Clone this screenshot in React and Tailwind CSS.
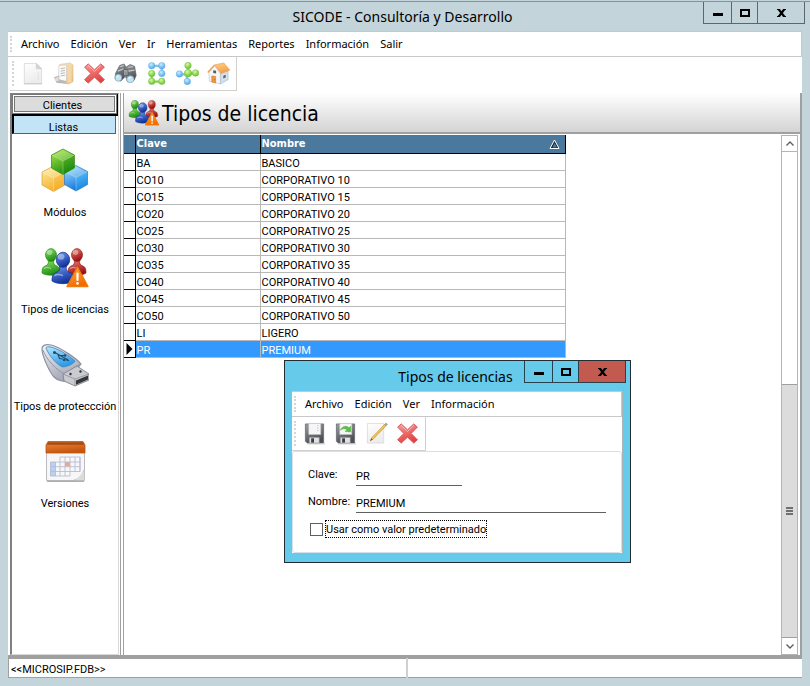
import React, { useState } from "react";

const ROWS = [
  ["BA", "BASICO"],
  ["CO10", "CORPORATIVO 10"],
  ["CO15", "CORPORATIVO 15"],
  ["CO20", "CORPORATIVO 20"],
  ["CO25", "CORPORATIVO 25"],
  ["CO30", "CORPORATIVO 30"],
  ["CO35", "CORPORATIVO 35"],
  ["CO40", "CORPORATIVO 40"],
  ["CO45", "CORPORATIVO 45"],
  ["CO50", "CORPORATIVO 50"],
  ["LI", "LIGERO"],
  ["PR", "PREMIUM"],
];

const MAIN_MENU = [
  "Archivo",
  "Edición",
  "Ver",
  "Ir",
  "Herramientas",
  "Reportes",
  "Información",
  "Salir",
];

const DIALOG_MENU = ["Archivo", "Edición", "Ver", "Información"];

// shared gradients, referenced by every icon below
function Gradients() {
  const linear = [
    ["gGreen", "#8ee86a", "#1f8f12"],
    ["gBlue", "#6f9cf5", "#12339c"],
    ["gRed", "#f08078", "#9c1010"],
    ["gWarn", "#ffb347", "#f26a00"],
    ["gCross", "#ff9a9a", "#e04444"],
    ["gPaper", "#ffffff", "#ececec"],
    ["gFolder", "#fbe6bd", "#e4bd80"],
    ["gDark", "#9a9ea3", "#4c4f54"],
    ["gSteel", "#f4f5f8", "#a4a8b4"],
    ["gGlass", "#b5e8ff", "#2e9be8"],
    ["gOrange", "#ef8a3c", "#c4560f"],
    ["gRoof", "#ffd089", "#f2a048"],
    ["gYellow", "#fff0a8", "#f3b02e"],
    ["gCubeBlue", "#a8ecff", "#1672dc"],
    ["gCubeGreen", "#b4ee50", "#22920c"],
  ];
  const radial = [
    ["rGreen", "#d8fba0", "#62c028"],
    ["rBlue", "#c9ecff", "#4ba6ec"],
  ];
  return (
    <svg width="0" height="0" className="absolute" aria-hidden="true">
      <defs>
        {linear.map(([id, a, b]) => (
          <linearGradient key={id} id={id} x1="0" y1="0" x2="0.4" y2="1">
            <stop offset="0" stopColor={a} />
            <stop offset="1" stopColor={b} />
          </linearGradient>
        ))}
        {radial.map(([id, a, b]) => (
          <radialGradient key={id} id={id} cx="0.4" cy="0.3" r="0.7">
            <stop offset="0" stopColor={a} />
            <stop offset="1" stopColor={b} />
          </radialGradient>
        ))}
      </defs>
    </svg>
  );
}

function NewIcon() {
  return (
    <svg viewBox="0 0 24 24" className="size-[23px]" aria-hidden="true">
      <path d="M3.500 1.500H16L21.500 7V22.500H3.500Z" fill="url(#gPaper)" stroke="#dcdcdc" />
      <path d="M16 1.500V7H21.500Z" fill="#d4d4d4" stroke="#c8c8c8" strokeWidth="0.600" />
      <path d="M18 11v1M18 14v1M18 17v1" stroke="#cfcfcf" />
      <path d="M3 22.800H22" stroke="#c6c6c6" />
    </svg>
  );
}

function FolderIcon() {
  return (
    <svg viewBox="0 0 24 24" className="size-[23px]" aria-hidden="true">
      <path d="M8 2.500L19 1L22 3V20.500L17 23L7 21Z" fill="url(#gFolder)" stroke="#dfc091" strokeWidth="0.600" />
      <path d="M7 4L15 2.800V19.500L7 21Z" fill="#fafafa" stroke="#c9c9c9" strokeWidth="0.600" />
      <path d="M9 7l4.500-.7M9 9.500l4.500-.7M9 12l4.500-.7M9 14.500l4.500-.7" stroke="#a4a4a4" strokeWidth="0.800" />
      <path d="M16 3.500L20.500 2.500V20.500L16 22.500Z" fill="#f3d7a6" />
      <path d="M2 16L7.500 14V18L13 19.500L15.500 22.500L5 22Z" fill="#b8b8b8" />
      <path d="M3 17L7 15.500V20L4 19.500Z" fill="#dedede" />
    </svg>
  );
}

function CrossIcon() {
  return (
    <svg viewBox="0 0 24 24" className="size-[23px]" aria-hidden="true">
      <path
        d="M5.500 2L12 8.200L18.500 2L22.300 5.300L15.800 12L22.300 18.500L18.500 22L12 15.800L5.500 22L1.700 18.500L8.200 12L1.700 5.300Z"
        fill="url(#gCross)"
        stroke="#d04848"
        strokeWidth="0.900"
        strokeLinejoin="round"
      />
      <path d="M5.500 3.600L12 9.800L18.500 3.600" fill="none" stroke="#ffc4c4" strokeWidth="0.900" />
    </svg>
  );
}

function BinocularsIcon() {
  return (
    <svg viewBox="0 0 24 24" className="size-[23px]" aria-hidden="true">
      <path d="M6 3.500L10.500 2L12.500 5L11 16L7 20L1 17.500L1.500 12Z" fill="url(#gDark)" stroke="#5b5e62" strokeWidth="0.600" />
      <path d="M13 5L17 2.500L21.500 4.500L23.200 14L21 19L14 20.500L12 15Z" fill="url(#gDark)" stroke="#5b5e62" strokeWidth="0.600" />
      <path d="M6.500 5L10 3.800M4 9.500L10 7M15 5.500L20 5M14.500 9.500L21.500 8.500" stroke="#c8cbd0" strokeWidth="1.200" />
      <rect x="10" y="8" width="4.500" height="6" rx="1" fill="#b7babf" stroke="#44474b" strokeWidth="0.700" />
      <path d="M11 10.500h2.500M11 12.500h2.500" stroke="#55585c" strokeWidth="0.800" />
      <ellipse cx="4.600" cy="16.500" rx="3.500" ry="3.600" fill="#bfe6f7" stroke="#8aa4b0" strokeWidth="0.800" />
      <ellipse cx="17" cy="18" rx="3.800" ry="3.600" fill="#bfe6f7" stroke="#8aa4b0" strokeWidth="0.800" />
      <path d="M3 16a2 2 0 0 1 2-1.500M15.500 17.500a2 2 0 0 1 2-1.500" fill="none" stroke="#fff" />
    </svg>
  );
}

function Ball({ x, y, color, r = 3.4 }) {
  return (
    <circle
      cx={x}
      cy={y}
      r={r}
      fill={color === "green" ? "url(#rGreen)" : "url(#rBlue)"}
      stroke={color === "green" ? "#78bf45" : "#6ab1e4"}
      strokeWidth="0.500"
    />
  );
}

function ChainIcon() {
  return (
    <svg viewBox="0 0 24 24" className="size-[23px]" aria-hidden="true">
      <path d="M7 4H17.500V12" fill="none" stroke="#7fc0ec" strokeWidth="2.400" />
      <path d="M7 12V20.500H17.500" fill="none" stroke="#8acc55" strokeWidth="2.400" />
      <Ball x={7} y={3.800} color="blue" />
      <Ball x={17.500} y={3.800} color="blue" />
      <Ball x={7} y={12} color="green" />
      <Ball x={17.500} y={12} color="blue" />
      <Ball x={7} y={20.200} color="green" />
      <Ball x={17.500} y={20.200} color="green" />
    </svg>
  );
}

function NodesIcon() {
  return (
    <svg viewBox="0 0 24 24" className="size-[23px]" aria-hidden="true">
      <path d="M12.500 4V12H20" fill="none" stroke="#8acc55" strokeWidth="2.400" />
      <path d="M4 13H11.500V20" fill="none" stroke="#7fc0ec" strokeWidth="2.400" />
      <Ball x={12.500} y={3.700} color="green" />
      <Ball x={20.400} y={11.500} color="green" />
      <Ball x={3.600} y={12.500} color="blue" />
      <Ball x={11.800} y={20.300} color="blue" />
      <Ball x={12.500} y={11.700} color="green" r={3.900} />
    </svg>
  );
}

function HouseIcon() {
  return (
    <svg viewBox="0 0 24 24" className="size-[23px]" aria-hidden="true">
      <path d="M2 11L8 4L14 12V23L2.500 20Z" fill="#f6f7fa" stroke="#b6bcc6" strokeWidth="0.600" />
      <path d="M14 12L22 9V18.500L14 23Z" fill="#cddfee" stroke="#a8b8c6" strokeWidth="0.600" />
      <path d="M8 3L17.500 1L23.800 8.500L14.500 12Z" fill="url(#gRoof)" stroke="#e8a050" strokeWidth="0.700" />
      <path d="M8 3L0.800 11" stroke="#eda04c" strokeWidth="1.500" />
      <path d="M5 14.500L9 15.200V22L5 20.900Z" fill="#f09a38" stroke="#c8741c" strokeWidth="0.600" />
      <circle cx="8" cy="18.500" r="0.500" fill="#7a400c" />
      <path d="M6.500 8.500L9.500 9V12L6.500 11.500Z" fill="#555d68" />
      <path d="M16.500 14L20 12.500V16.500L16.500 18Z" fill="#5d6874" stroke="#fff" strokeWidth="0.700" />
    </svg>
  );
}

function Person({ fill, stroke, transform }) {
  return (
    <g transform={transform} fill={fill} stroke={stroke} strokeWidth="0.600">
      <path d="M6 12C7 15 6 17 3 18C.5 19 0 21 0 25C4 28 14 28 18 25C18 21 17.500 19 15 18C12 17 11 15 12 12Z" />
      <ellipse cx="9" cy="7" rx="5.500" ry="6.400" />
      <ellipse cx="7.500" cy="4.500" rx="2.800" ry="2.400" fill="#fff" opacity="0.400" stroke="none" />
      <path d="M2 20.500C5 18.500 7 19.500 9 20.500" fill="none" stroke="#fff" opacity="0.450" strokeWidth="1.200" />
    </g>
  );
}

function PeopleIcon({ className }) {
  return (
    <svg viewBox="0 0 48 40" className={className} aria-hidden="true">
      <Person fill="url(#gRed)" stroke="#8c1414" transform="translate(27 0)" />
      <Person fill="url(#gGreen)" stroke="#1c7a12" transform="translate(1 0)" />
      <Person fill="url(#gBlue)" stroke="#142c84" transform="translate(11 3.500) scale(1.220 1.180)" />
      <path d="M36.500 19L47 38.500H26Z" fill="url(#gWarn)" stroke="#ee7a10" strokeWidth="1.400" strokeLinejoin="round" />
      <path d="M36.500 25.500V32" stroke="#fff" strokeWidth="2.200" strokeLinecap="round" />
      <circle cx="36.500" cy="35.400" r="1.300" fill="#fff" />
    </svg>
  );
}

function Cube({ transform, fill, edge, side }) {
  return (
    <g transform={transform} stroke={edge} strokeWidth="0.700" strokeLinejoin="round">
      <path d="M11.500 0L23 6V19L11.500 25.500L0 19V6Z" fill={fill} />
      <path d="M11.500 1L22 6.300L11.500 12L1 6.300Z" fill="#fff" opacity="0.200" stroke="none" />
      <path d="M11.500 12V25L22.500 18.700V6.500Z" fill={side} opacity="0.350" stroke="none" />
      <path d="M0.500 6.300L11.500 12L22.500 6.300M11.500 12V25" fill="none" stroke="#fff" opacity="0.400" />
    </g>
  );
}

function CubesIcon() {
  return (
    <svg viewBox="0 0 48 48" className="size-12" aria-hidden="true">
      <Cube transform="translate(1 19)" fill="url(#gYellow)" edge="#dba034" side="#f8b030" />
      <Cube transform="translate(23.500 18.500)" fill="url(#gCubeBlue)" edge="#2c78c4" side="#34c0f8" />
      <Cube transform="translate(10.500 2)" fill="url(#gCubeGreen)" edge="#2f8a18" side="#1c8410" />
    </svg>
  );
}

function UsbIcon() {
  return (
    <svg viewBox="0 0 48 48" className="size-12" aria-hidden="true">
      <path d="M1 8C1 15 9 32 13 36C16 39 22 41 25 40L40 23C36 18 19 6 10 4C5 3 1 4 1 8Z" fill="url(#gSteel)" stroke="#8d90a4" strokeWidth="1.200" />
      <path d="M2 9C4 17 17 31 24 33L39 23" fill="none" stroke="#8d90a4" strokeWidth="0.900" />
      <path d="M5 7C8 15 17 25 22 26C26 26 34 22 34 20C28 14 15 7 10 6C7 5.500 5 6 5 7Z" fill="url(#gGlass)" stroke="#3f87b8" strokeWidth="0.800" />
      <path d="M13 11L27 19M17 13.500L18.500 17.500L22 18M19 14.500L24 14.500" fill="none" stroke="#234a66" strokeWidth="1.100" />
      <circle cx="13.500" cy="11.500" r="1.500" fill="#234a66" />
      <circle cx="24" cy="14.500" r="1.300" fill="#234a66" />
      <path d="M22 18h2.500v2H22ZM26 17.500L28.500 20.200L25.500 20Z" fill="#234a66" />
      <path d="M22 33L36 25L48 33V39L34 45L23 40Z" fill="#c9cbd0" stroke="#82858c" strokeWidth="0.900" />
      <path d="M22 33L34 38L48 33M34 38V45" fill="none" stroke="#8e9198" strokeWidth="0.800" />
      <path d="M35 39.500L47 34.500V38.500L35 43.800Z" fill="#34363a" />
      <path d="M28.500 32.500l2 1M38.500 30l2 1" stroke="#3a3c40" strokeWidth="2.200" />
    </svg>
  );
}

function CalendarIcon() {
  return (
    <svg viewBox="0 0 48 48" className="size-12" aria-hidden="true">
      <path d="M5.500 14H43.500V42.500H5.500Z" fill="#f7f7f8" stroke="#bcbcc0" />
      <path d="M7 3.500H42L44 7V15H5V7Z" fill="url(#gOrange)" stroke="#b9560f" strokeWidth="0.800" />
      <path d="M7 4.200H42L43 6.800H6Z" fill="#a84a12" />
      <path d="M9.500 24H14.500V38H9.500Z" fill="#b9d0f4" />
      <path d="M24 24H29V28.500H24Z" fill="#f4a67e" />
      <path
        d="M19 19H39V33.500H9.500M9.500 24H39M9.500 28.700H39M9.500 24V38H29V19M14.500 24V38M19 19V38M24 19V38M34 19V33.500M39 19V33.500"
        fill="none"
        stroke="#b7bcd2"
        strokeWidth="0.900"
      />
      <path d="M33 42C38 41 41 37 43 32V42Z" fill="#fff" stroke="#c2c2c6" strokeWidth="0.800" />
      <path d="M34.500 42.300H43.200V34Z" fill="#dcdcde" />
      <path d="M6 43.300H43" stroke="#9c9ca0" />
    </svg>
  );
}

function SaveIcon({ arrow }) {
  return (
    <svg viewBox="0 0 24 24" className="size-[23px]" aria-hidden="true">
      <path d="M2.500 2H21.500V22H4.500L2.500 20Z" fill="url(#gDark)" stroke="#66696d" strokeWidth="0.800" />
      <path d="M6 1.500H18.500V13H6Z" fill="#f6f6f6" stroke="#c6c6c6" strokeWidth="0.600" />
      <path d="M6.500 16H17V22H6.500Z" fill="#e2e2e2" stroke="#7c7f84" strokeWidth="0.600" />
      <path d="M8.500 17H11.500V21.500H8.500Z" fill="#3c3f44" />
      <path d="M4 22.800H23" stroke="#c2c2c2" />
      {arrow ? (
        <path d="M6.500 8.500C8.500 4 13.500 3.500 15.500 6L17.500 4.500V10.500L11.500 9.800L13.500 8C11.500 6.500 9 7 6.500 8.500Z" fill="#58c04a" stroke="#48a83c" strokeWidth="0.400" />
      ) : (
        <path d="M15.500 3.500v1M15.500 6v1M15.500 8.500v1" stroke="#a8a8a8" />
      )}
    </svg>
  );
}

function EditIcon() {
  return (
    <svg viewBox="0 0 24 24" className="size-[23px]" aria-hidden="true">
      <path d="M2.500 1.500H19.500V22H2.500Z" fill="url(#gPaper)" stroke="#d8d8d8" strokeWidth="0.800" />
      <path d="M20.500 2.500L22 4L8 18.500L6.500 17Z" fill="#f5c44e" stroke="#b98a2c" strokeWidth="0.600" />
      <path d="M6.500 17L8 18.500L5 20Z" fill="#6c5230" />
      <path d="M20.500 2.500L22 1L23.500 2.500L22 4Z" fill="#a8a8b0" stroke="#82828a" strokeWidth="0.500" />
    </svg>
  );
}

function SaveNextIcon() {
  return <SaveIcon arrow />;
}

const MAIN_TOOLS = [
  ["Nuevo", NewIcon],
  ["Abrir", FolderIcon],
  ["Eliminar", CrossIcon],
  ["Buscar", BinocularsIcon],
  ["Estructura", ChainIcon],
  ["Relaciones", NodesIcon],
  ["Inicio", HouseIcon],
];

const DIALOG_TOOLS = [
  ["Guardar", SaveIcon],
  ["Guardar y nuevo", SaveNextIcon],
  ["Editar", EditIcon],
  ["Eliminar", CrossIcon],
];

const SIDE_ITEMS = [
  ["Módulos", <CubesIcon />],
  ["Tipos de licencias", <PeopleIcon className="h-10 w-12" />],
  ["Tipos de proteccción", <UsbIcon />],
  ["Versiones", <CalendarIcon />],
];

function Grip() {
  return (
    <span className="my-1 w-px self-stretch border-l-2 border-dotted border-gray-300" />
  );
}

function MenuBar({ items }) {
  return (
    <nav className="flex h-[26px] items-center border-y border-r border-[#c8c8cc] bg-white pl-[2px] font-['Noto_Sans',sans-serif] text-[11px]">
      <Grip />
      <div className="flex gap-[11px] pt-px pl-[9px]">
        {items.map((item) => (
          <button key={item} type="button">
            {item}
          </button>
        ))}
      </div>
    </nav>
  );
}

function ToolBar({ tools }) {
  return (
    <div className="flex h-[34px] w-fit items-center border-r border-b border-[#d0d0d0] bg-white px-[2px]">
      <Grip />
      <div className="flex pl-[3px]">
        {tools.map(([name, Icon]) => (
          <button
            key={name}
            type="button"
            aria-label={name}
            className="flex w-[31px] justify-center"
          >
            <Icon />
          </button>
        ))}
      </div>
    </div>
  );
}

function TitleBar({ title, closeClass, lineClass, className }) {
  return (
    <header className={`flex ${className}`}>
      <div className="flex-1" />
      <h1 className="self-center font-['Noto_Sans',sans-serif] text-[14px] whitespace-nowrap">
        {title}
      </h1>
      <div className="flex flex-1 items-start justify-end">
        <div className={`flex h-[22px] divide-x border border-t-0 ${lineClass}`}>
          <button
            type="button"
            aria-label="Minimizar"
            className={`flex w-7 items-center justify-center ${lineClass}`}
          >
            <span className="mt-1 h-[3px] w-[10px] bg-black" />
          </button>
          <button
            type="button"
            aria-label="Maximizar"
            className={`flex w-[26px] items-center justify-center ${lineClass}`}
          >
            <span className="h-2 w-[10px] border-2 border-black" />
          </button>
          <button
            type="button"
            aria-label="Cerrar"
            className={`flex w-[46px] items-center justify-center ${closeClass}`}
          >
            <svg viewBox="0 0 9 8" className="h-2 w-[9px]" aria-hidden="true">
              <path d="M1.500 0L7.500 8M7.500 0L1.500 8" stroke="#000" strokeWidth="2.200" />
              <path d="M0 .5h3M6 .5h3M0 7.500h3M6 7.500h3" stroke="#000" />
            </svg>
          </button>
        </div>
      </div>
    </header>
  );
}

function SideBar() {
  return (
    <aside className="flex w-[109px] shrink-0 flex-col border-t border-r border-b border-l-2 border-[#d8d8d8] border-t-[#808080] border-l-[#808080] bg-white">
      <button
        type="button"
        className="h-[22px] border-r border-b-2 border-black bg-[#dcdcdc] pt-1 pr-1 shadow-[inset_0_0_0_1px_#777,inset_0_0_0_2px_#fff,inset_0_0_0_3px_#777]"
      >
        Clientes
      </button>
      <button
        type="button"
        className="mr-[2px] h-[18px] border border-t-0 border-l-2 border-[#2f6d9c] border-l-black bg-[#c2e4f6] pt-1 pr-[2px]"
      >
        Listas
      </button>
      <div className="flex flex-col pt-[13px]">
        {SIDE_ITEMS.map(([label, icon]) => (
          <button
            key={label}
            type="button"
            className="flex h-[97px] flex-col items-center gap-[10px] whitespace-nowrap"
          >
            <span className="flex h-12 items-center">{icon}</span>
            <span className="leading-4">{label}</span>
          </button>
        ))}
      </div>
    </aside>
  );
}

function LicenseTable({ selected, onSelect }) {
  return (
    <table className="w-[441px] table-fixed border-collapse self-start">
      <colgroup>
        <col className="w-[11px]" />
        <col className="w-[125px]" />
        <col className="w-[305px]" />
      </colgroup>
      <thead>
        <tr className="h-[18px] bg-[#4a799d] text-left font-['DejaVu_Sans_Condensed',sans-serif] text-white">
          <th className="border-r border-b border-black p-0" />
          <th className="border-r border-b border-black p-0 pt-px pl-px leading-4">Clave</th>
          <th className="border-r border-b border-black p-0 pt-px pl-px leading-4">
            <div className="flex items-center justify-between pr-[5px]">
              Nombre
              <svg viewBox="0 0 11 10" className="h-[10px] w-[11px]" aria-hidden="true">
                <path d="M5.500 1L10 9.500H1Z" fill="#222" stroke="#fff" />
                <path d="M5.500 4L8 8.500H3.500Z" fill="#4a799d" />
              </svg>
            </div>
          </th>
        </tr>
      </thead>
      <tbody>
        {ROWS.map(([clave, nombre]) => {
          const active = clave === selected;
          return (
            <tr
              key={clave}
              onClick={() => onSelect(clave)}
              className={active ? "h-[17px] bg-[#3399ff] text-white" : "h-[17px]"}
            >
              <td className="border-r border-b border-black bg-white p-0">
                {active && (
                  <svg viewBox="0 0 7 12" className="ml-[2px] h-3 w-[7px]" aria-hidden="true">
                    <path d="M0.500 0L6.500 6L0.500 12Z" fill="#000" />
                  </svg>
                )}
              </td>
              <td className="border-r border-b border-[#b8b8b8] p-0 pt-[3px] pl-px leading-[13px]">
                {clave}
              </td>
              <td className="border-r border-b border-[#b8b8b8] p-0 pt-[3px] pl-px leading-[13px]">
                {nombre}
              </td>
            </tr>
          );
        })}
      </tbody>
    </table>
  );
}

function ScrollBar() {
  return (
    <div className="flex w-[17px] shrink-0 flex-col border border-[#b4b4b4] bg-white">
      <button
        type="button"
        aria-label="Subir"
        className="flex h-4 items-center justify-center border-b border-[#b4b4b4]"
      >
        <svg viewBox="0 0 8 5" className="h-[5px] w-2" aria-hidden="true">
          <path d="M0.500 4.500L4 1L7.500 4.500" fill="none" stroke="#606060" strokeWidth="1.400" />
        </svg>
      </button>
      <div className="flex-[232_1_0%]" />
      <div className="flex flex-[253_1_0%] flex-col items-center justify-center gap-px border-y border-[#a0a0a0] bg-[#dcdcdc]">
        <span className="h-[2px] w-[7px] bg-[#707070]" />
        <span className="h-[2px] w-[7px] bg-[#707070]" />
        <span className="h-[2px] w-[7px] bg-[#707070]" />
      </div>
      <button type="button" aria-label="Bajar" className="flex h-4 items-center justify-center">
        <svg viewBox="0 0 8 5" className="h-[5px] w-2" aria-hidden="true">
          <path d="M0.500 .5L4 4L7.500 .5" fill="none" stroke="#606060" strokeWidth="1.400" />
        </svg>
      </button>
    </div>
  );
}

function LicenseDialog() {
  const [clave, setClave] = useState("PR");
  const [nombre, setNombre] = useState("PREMIUM");
  const [porDefecto, setPorDefecto] = useState(false);

  return (
    <section className="absolute top-[360px] left-[284px] w-[347px] border border-[#222c33] bg-[#66caea] pb-2">
      <TitleBar
        title="Tipos de licencias"
        className="h-[30px] pr-1"
        lineClass="border-[#28414d]"
        closeClass="bg-[#c35a50]"
      />
      <div className="mx-[7px] border-r border-b border-[#a8b4b8] bg-white">
        <MenuBar items={DIALOG_MENU} />
        <ToolBar tools={DIALOG_TOOLS} />
        <form className="flex flex-col rounded-[3px] border border-[#d5e0e8] px-[15px] pt-[14px] pb-[14px]">
          <div className="flex h-[27px]">
            <label htmlFor="clave" className="w-12 pt-px leading-4">
              Clave:
            </label>
            <input
              id="clave"
              value={clave}
              onChange={(e) => setClave(e.target.value)}
              className="h-5 w-[106px] border-b border-[#606060] pt-[2px] outline-none"
            />
          </div>
          <div className="flex h-[27px]">
            <label htmlFor="nombre" className="w-12 pt-px leading-4">
              Nombre:
            </label>
            <input
              id="nombre"
              value={nombre}
              onChange={(e) => setNombre(e.target.value)}
              className="h-5 w-[250px] border-b border-[#606060] pt-[2px] outline-none"
            />
          </div>
          <div className="flex items-center gap-[2px] pl-[2px]">
            <input
              id="predeterminado"
              type="checkbox"
              checked={porDefecto}
              onChange={(e) => setPorDefecto(e.target.checked)}
              className="size-[13px] appearance-none border border-[#606060] bg-white checked:bg-[#3399ff]"
            />
            <label
              htmlFor="predeterminado"
              className="h-[18px] border border-dotted border-black pt-px leading-4 whitespace-nowrap"
            >
              Usar como valor predeterminado
            </label>
          </div>
        </form>
      </div>
    </section>
  );
}

export default function App() {
  const [selected, setSelected] = useState("PR");

  return (
    <div className="relative flex min-h-screen flex-col bg-[#c3d5db] px-2 pb-2 font-['Roboto',sans-serif] text-[11px] text-black">
      <Gradients />
      <TitleBar
        title="SICODE - Consultoría y Desarrollo"
        className="-mx-2 mt-px h-[30px] border-t border-[#8a8f92] pr-[5px]"
        lineClass="border-[#5c666b]"
        closeClass=""
      />
      <div className="flex flex-1 flex-col bg-white">
        <MenuBar items={MAIN_MENU} />
        <div className="pl-[2px]">
          <ToolBar tools={MAIN_TOOLS} />
        </div>
        <div className="flex flex-1 border-b-4 border-[#a0a0a0] pt-[2px] pl-[2px]">
          <SideBar />
          <main className="ml-px flex flex-1 flex-col border-r-2 border-l-4 border-double border-[#a0a0a0]">
            <div className="flex h-[41px] items-center border-b-2 border-solid border-[#a0a0a0] bg-linear-to-b from-white to-[#d4d4d4] pl-1">
              <PeopleIcon className="h-[26px] w-8" />
              <h2 className="pt-1 pl-[2px] font-['DejaVu_Sans_Condensed',sans-serif] text-[21px]">
                Tipos de licencia
              </h2>
            </div>
            <div className="flex flex-1 justify-between pt-px pr-[2px]">
              <LicenseTable selected={selected} onSelect={setSelected} />
              <ScrollBar />
            </div>
          </main>
        </div>
        <footer className="flex h-[19px] items-center border-b border-l border-[#a0a0a0]">
          <span className="w-[399px] border-r-2 border-[#d0d0d0] pt-1 pl-[2px] leading-4">
            &lt;&lt;MICROSIP.FDB&gt;&gt;
          </span>
        </footer>
      </div>
      <LicenseDialog />
    </div>
  );
}
